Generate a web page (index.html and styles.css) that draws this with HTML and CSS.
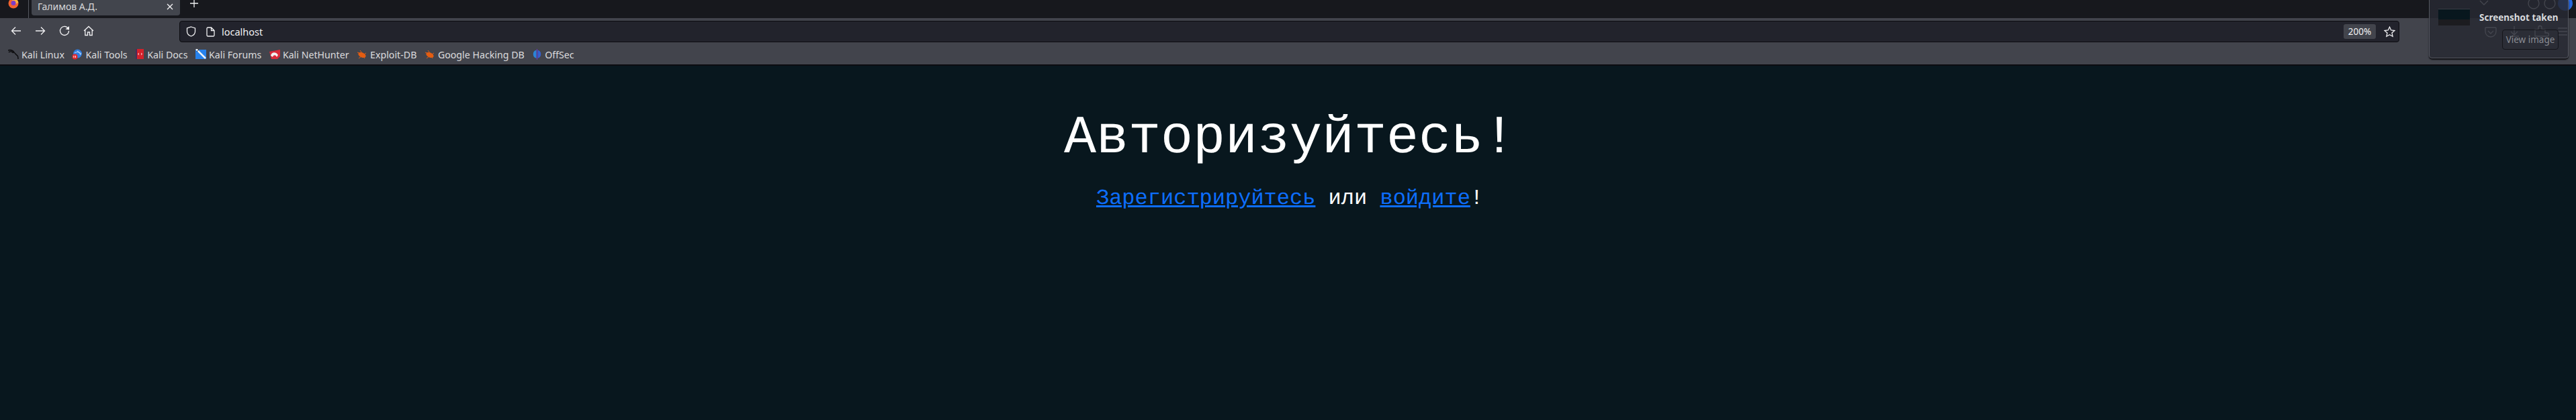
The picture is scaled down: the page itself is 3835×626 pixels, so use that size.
FILE: index.html
```html
<!DOCTYPE html>
<html lang="ru">
<head>
    <meta charset="UTF-8">
    <title>Галимов А.Д.</title>
    <link rel="stylesheet" href="styles.css">
</head>
<body>
    <div class="tabbar">
        <svg class="ff-logo" width="16" height="16" viewBox="0 0 16 16">
            <circle cx="8" cy="8" r="7.5" fill="#f2622e"/>
            <path d="M8 .5a7.5 7.5 0 0 1 7.4 6.500L11 9 6 4z" fill="#ffb13d"/>
            <circle cx="8" cy="7.500" r="3.500" fill="#7d3cc8"/>
        </svg>
        <div class="tab-sep"></div>
        <div class="tab">
            <span class="tab-title">Галимов А.Д.</span>
            <svg width="10" height="10" viewBox="0 0 10 10" class="stroke-icon"><path d="M1 1l8 8M9 1l-8 8"/></svg>
        </div>
        <svg class="new-tab stroke-icon" width="14" height="14" viewBox="0 0 14 14"><path d="M7 1v12M1 7h12"/></svg>
    </div>

    <div class="navbar">
        <div class="nav-buttons">
            <svg width="16" height="16" viewBox="0 0 16 16" class="stroke-icon"><path d="M15 8H1.500M7 2.500L1.500 8 7 13.500"/></svg>
            <svg width="16" height="16" viewBox="0 0 16 16" class="stroke-icon"><path d="M1 8h13.500M9 2.500L14.500 8 9 13.500"/></svg>
            <svg width="16" height="16" viewBox="0 0 16 16" class="stroke-icon"><path d="M13.500 4.500A6.500 6.500 0 1 0 14.500 8"/><path class="fill-icon" d="M9.500 5.500L15 1v5.500z"/></svg>
            <svg width="16" height="16" viewBox="0 0 16 16" class="stroke-icon"><path d="M1 8l7-6.500L15 8M2.800 6.500v8h3.700v-4.500h3v4.500h3.700v-8"/></svg>
        </div>
        <div class="urlbar">
            <svg width="15" height="16" viewBox="0 0 15 16" class="stroke-icon"><path d="M7.500 1l6 2v5c0 3.500-2.800 5.800-6 7-3.200-1.200-6-3.500-6-7V3z"/></svg>
            <svg class="page-icon stroke-icon" width="13" height="15" viewBox="0 0 13 15"><path d="M2.500 1h5l4.500 4.500v7a1.500 1.500 0 0 1-1.500 1.500h-8A1.500 1.500 0 0 1 1 12.500v-10A1.500 1.500 0 0 1 2.500 1zM7.500 1v4.500H12"/></svg>
            <span class="url-text">localhost</span>
            <span class="zoom-level">200%</span>
            <svg class="star stroke-icon" width="17" height="17" viewBox="0 0 17 17"><path d="M8.500 1.200l2.200 4.800 5.200.6-3.900 3.500 1.100 5.200-4.600-2.600-4.600 2.600 1.100-5.200L1.100 6.600l5.200-.6z"/></svg>
        </div>
    </div>

    <div class="bookmarks">
        <a class="bookmark">
            <svg width="16" height="16" viewBox="0 0 16 16" fill="none" stroke="#0c0c0e" stroke-width="1.500"><path d="M0 2c4-1 7 0 9 3 2 2 3 4 5 5 1 1 1 3 1 5M1 5c2-2 5-1 7 1"/></svg>
            Kali Linux
        </a>
        <a class="bookmark">
            <svg width="16" height="16" viewBox="0 0 16 16"><circle cx="8.500" cy="7" r="6.500" fill="#2f7ee0"/><path d="M4 6c3-2 6-2 10 1M8 3c2 1 4 3 5 6" stroke="#cfe3fa" fill="none"/><circle cx="4.500" cy="11.500" r="4" fill="#e0282e"/><path d="M3 10v3M5.500 10v3" stroke="#fff"/></svg>
            Kali Tools
        </a>
        <a class="bookmark">
            <svg width="14" height="16" viewBox="0 0 14 16"><rect x="1" y="0" width="12" height="15" fill="#d3212a"/><rect x="1" y="0" width="2" height="15" fill="#4a2b5a"/><path d="M6 6L4.500 7.500 6 9M9 6l1.500 1.500L9 9" stroke="#fff" fill="none"/></svg>
            Kali Docs
        </a>
        <a class="bookmark">
            <svg width="16" height="16" viewBox="0 0 16 16"><rect y="1" width="16" height="14" fill="#2782ec"/><path d="M1 0l14 14" stroke="#eef3f8" stroke-width="2.500"/><path d="M5 1L2 4" stroke="#22262c"/></svg>
            Kali Forums
        </a>
        <a class="bookmark">
            <svg width="16" height="16" viewBox="0 0 16 16"><path d="M0 4L16 1v10l-4 4H3z" fill="#d92b3a"/><path d="M2 10c1-5 7-7 11-1l-2 3c-2-4-5-3-6 0z" fill="#f2f2f2"/></svg>
            Kali NetHunter
        </a>
        <a class="bookmark">
            <svg width="16" height="14" viewBox="0 0 16 14"><ellipse cx="8" cy="8" rx="6" ry="3.500" fill="#e35d12" transform="rotate(25 8 8)"/><path d="M1 4l5 2M5 1l3 4M14 5l-3 2M3 13l4-3M12 13l-2-3" stroke="#e35d12"/></svg>
            Exploit-DB
        </a>
        <a class="bookmark">
            <svg width="16" height="14" viewBox="0 0 16 14"><ellipse cx="8" cy="8" rx="6" ry="3.500" fill="#e35d12" transform="rotate(25 8 8)"/><path d="M1 4l5 2M5 1l3 4M14 5l-3 2M3 13l4-3M12 13l-2-3" stroke="#e35d12"/></svg>
            Google Hacking DB
        </a>
        <a class="bookmark">
            <svg width="15" height="16" viewBox="0 0 15 16"><path d="M6.500 1.500A6.500 6.500 0 0 0 6.500 14z" fill="#2c83d8"/><path d="M8.500 1.500A6.500 6.500 0 0 1 8.500 14z" fill="#3560d0"/><path d="M7.500 0v16" stroke="#6b32c0"/></svg>
            OffSec
        </a>
    </div>

    <main class="content">
        <h1>Авторизуйтесь!</h1>
        <p><a href="#">Зарегистрируйтесь</a> или <a href="#">войдите</a>!</p>
    </main>

    <!-- toolbar buttons that show through the notification -->
    <svg class="toolbar-end" width="150" height="60" viewBox="0 0 150 60" fill="none" stroke="#fff" stroke-width="1.300">
        <path d="M6 1l6 6 6-6"/>
        <circle cx="86" cy="5" r="8"/>
        <circle cx="110" cy="5" r="8"/>
        <circle cx="133" cy="5" r="11" fill="#2a6ff0" stroke="none"/>
        <path d="M15 41h14a1 1 0 0 1 1 1v5a8 8 0 0 1-16 0v-5a1 1 0 0 1 1-1zM18 46l4 4 4-4"/>
        <path d="M57 39v13M52 47l5 5 5-5M50 54h14"/>
        <path d="M88 44h5v-3a2.500 2.500 0 0 1 5 0v3h5v5h3a2.500 2.500 0 0 1 0 5h-3v0H88z"/>
        <path d="M122 42h14M122 47h14M122 52h14"/>
    </svg>

    <div class="notification">
        <div class="thumb">
            <div class="thumb-page"></div>
            <div class="thumb-bar"></div>
        </div>
        <div class="notif-body">
            <div class="notif-title">Screenshot taken</div>
            <div class="notif-btn">View image</div>
        </div>
    </div>
</body>
</html>
```

FILE: styles.css
```css
* {
    margin: 0;
    padding: 0;
    box-sizing: border-box;
}

body {
    height: 626px;
    display: flex;
    flex-direction: column;
    background: #08171e;
    font-family: "Noto Sans", sans-serif;
    overflow: hidden;
}

.stroke-icon {
    fill: none;
    stroke: #f1f1f3;
    stroke-width: 1.3;
    flex-shrink: 0;
}

.fill-icon {
    fill: #f1f1f3;
    stroke: none;
}

.tabbar {
    height: 27px;
    display: flex;
    align-items: flex-start;
    background: #17181d;
    color: #e6e6e8;
}

.ff-logo {
    margin: -3px 0 0 12px;
}

.tab-sep {
    width: 1px;
    height: 27px;
    margin-left: 14px;
    background: #55585f;
}

.tab {
    width: 221px;
    height: 23px;
    margin-left: 4px;
    padding: 0 10px 4px 9px;
    display: flex;
    align-items: center;
    justify-content: space-between;
    background: #42454d;
    border-radius: 0 0 4px 4px;
}

.tab-title {
    font-size: 14px;
    color: #d8d8da;
}

.new-tab {
    margin: -2px 0 0 14px;
}

.navbar {
    height: 38px;
    display: flex;
    align-items: center;
    padding-left: 16px;
    background: #42444c;
}

.nav-buttons {
    display: flex;
    gap: 20px;
    width: 251px;
}

.urlbar {
    width: 3305px;
    height: 32px;
    margin-top: 2px;
    display: flex;
    align-items: center;
    padding: 0 5px 0 9px;
    background: #22232c;
    border: 1px solid #0c0c10;
    border-radius: 4px;
    color: #f1f1f3;
}

.page-icon {
    margin-left: 15px;
}

.url-text {
    margin-left: 10px;
    flex: 1;
    font-size: 14.5px;
}

.zoom-level {
    width: 48px;
    height: 22px;
    line-height: 22px;
    text-align: center;
    font-size: 13.5px;
    background: #42444c;
    border-radius: 3px;
}

.star {
    margin-left: 12px;
}

.bookmarks {
    height: 33px;
    display: flex;
    align-items: center;
    gap: 11.5px;
    padding: 1px 0 0 12px;
    background: #42444c;
    border-bottom: 2px solid #0c0c10;
}

.bookmark {
    display: flex;
    align-items: center;
    gap: 4px;
    font-size: 14.2px;
    color: #dcdcde;
    white-space: nowrap;
}

.content {
    flex: 1;
    padding: 63px 0 0 5px;
    text-align: center;
    font-family: "Liberation Mono", monospace;
    text-rendering: geometricPrecision;
    color: #fff;
}

.content h1 {
    font-size: 80px;
    font-weight: normal;
    line-height: 92px;
}

.content p {
    margin-top: 24px;
    font-size: 32px;
    line-height: 37px;
}

.content a {
    color: #0d6efd;
}

.toolbar-end {
    position: absolute;
    top: 0;
    left: 3686px;
    opacity: 0.9;
}

.notification {
    position: absolute;
    top: 0;
    left: 3616px;
    width: 208px;
    height: 87px;
    display: flex;
    padding: 13px 14px 0 13px;
    background: rgba(39, 41, 50, 0.85);
    border: 1px solid #555860;
    border-top: 0;
    border-radius: 0 0 5px 5px;
    box-shadow: 0 2px 2px #0c0c10;
}

.thumb {
    width: 48px;
    height: 25px;
    display: flex;
    flex-direction: column;
}

.thumb-page {
    height: 16px;
    background: #08171e;
    border-top: 1px solid #3a3d44;
}

.thumb-bar {
    height: 9px;
    background: #1c1c20;
}

.notif-body {
    margin-left: 14px;
    flex: 1;
}

.notif-title {
    margin-top: 4px;
    font-size: 13.5px;
    font-weight: bold;
    color: #d8dadd;
    white-space: nowrap;
}

.notif-btn {
    width: 84px;
    height: 30px;
    margin: 9px 0 0 34px;
    line-height: 28px;
    text-align: center;
    font-size: 13.5px;
    color: #8a8c93;
    border: 1px solid #14151a;
    border-radius: 4px;
    white-space: nowrap;
}
```
